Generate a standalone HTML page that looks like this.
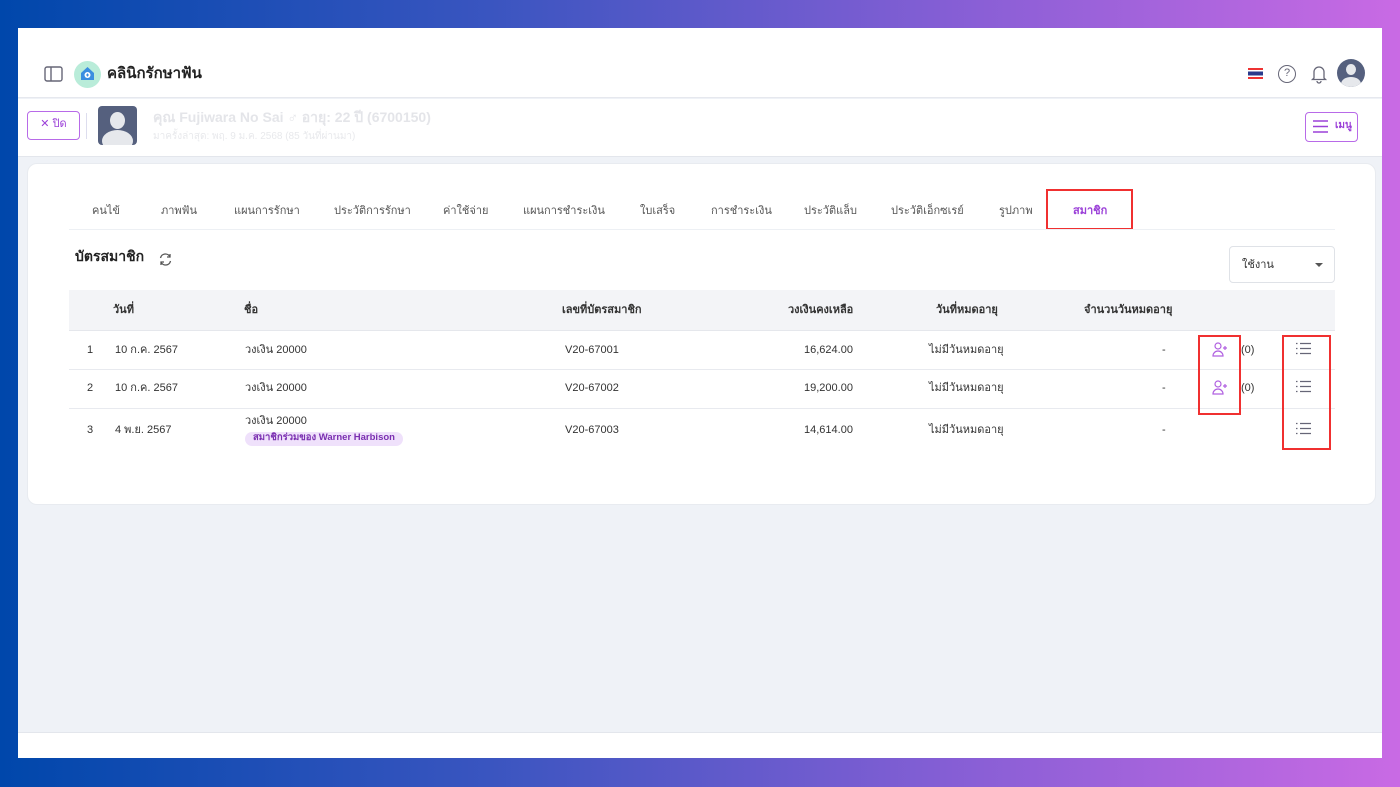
<!DOCTYPE html>
<html><head><meta charset="utf-8"><style>
*{box-sizing:border-box;margin:0;padding:0}
body{width:1400px;height:787px;overflow:hidden;background:linear-gradient(90deg,#0047ab 0%,#3a55c0 35%,#8a5fd6 70%,#c96ae4 100%);font-family:"Liberation Sans","DejaVu Sans",sans-serif;position:relative;color:#222}
.frame{position:absolute;left:18px;top:28px;width:1364px;height:730px;background:#eff2f7;overflow:hidden}
.hdr{position:absolute;left:0;top:0;width:1364px;height:70px;background:#fff;border-bottom:1px solid #e6e8ee}
.pbar{position:absolute;left:0;top:71px;width:1364px;height:58px;background:#fff;border-bottom:1px solid #e3e6ec}
.foot{position:absolute;left:0;top:704px;width:1364px;height:26px;background:#fff;border-top:1px solid #e3e6ec}
.card{position:absolute;left:9px;top:135px;width:1349px;height:342px;background:#fff;border-radius:10px;border:1px solid #e8ebf0}
.abs{position:absolute}
.tab{position:absolute;top:37px;font-size:11px;color:#555}
.th{position:absolute;font-size:11px;font-weight:bold;color:#333}
.td{position:absolute;font-size:11px;color:#333}
.t{margin-top:-4px}
.red{position:absolute;border:2px solid #f03030}
.line{position:absolute;left:41px;width:1266px;height:1px;background:#e8eaef}
</style></head><body>
<div class="frame">
 <div class="hdr">
  <svg class="abs" style="left:26px;top:38px" width="19" height="16" viewBox="0 0 19 16"><rect x="1" y="1" width="17" height="14" rx="2" fill="none" stroke="#667" stroke-width="1.4"/><line x1="7" y1="1" x2="7" y2="15" stroke="#667" stroke-width="1.4"/></svg>
  <div class="abs" style="left:56px;top:33px;width:27px;height:27px;border-radius:50%;background:#b9ecd9"></div>
  <svg class="abs" style="left:61px;top:37px" width="17" height="17" viewBox="0 0 17 17"><path d="M2 8 L8.5 2 L15 8 V15 H2Z" fill="#3a8ee0"/><circle cx="8.5" cy="10" r="3" fill="#fff"/><path d="M8.5 8.5v3M7 10h3" stroke="#3a8ee0" stroke-width="1"/></svg>
  <div class="abs" style="left:89px;top:33px;font-size:15px;font-weight:bold;color:#222">คลินิกรักษาฟัน</div>
  <div class="abs" style="left:1230px;top:40px;width:15px;height:11px;background:linear-gradient(#e33 0 18%,#fff 18% 34%,#2a3a8c 34% 66%,#fff 66% 82%,#e33 82%)"></div>
  <div class="abs" style="left:1260px;top:37px;width:18px;height:18px;border:1.5px solid #667;border-radius:50%;font-size:11px;text-align:center;line-height:15px;color:#667">?</div>
  <svg class="abs" style="left:1292px;top:36px" width="18" height="20" viewBox="0 0 18 20"><path d="M4 14 V8 a5 5 0 0 1 10 0 V14 L15.5 15.5 H2.5Z M7 17 a2 2 0 0 0 4 0" fill="none" stroke="#667" stroke-width="1.3"/></svg>
  <div class="abs" style="left:1319px;top:31px;width:28px;height:28px;border-radius:50%;background:#55607e;overflow:hidden"><div class="abs" style="left:9px;top:5px;width:10px;height:11px;border-radius:50%;background:#e6e8ec"></div><div class="abs" style="left:4px;top:18px;width:20px;height:14px;border-radius:50%;background:#e6e8ec"></div></div>
 </div>
 <div class="pbar">
  <div class="abs" style="left:9px;top:12px;width:53px;height:29px;border:1px solid #b86ae8;border-radius:4px;color:#9b40d8;font-size:11px;line-height:25px;text-align:center">✕ ปิด</div>
  <div class="abs" style="left:68px;top:14px;width:1px;height:26px;background:#dde"></div>
  <div class="abs" style="left:80px;top:7px;width:39px;height:39px;border-radius:4px;background:#55607e;overflow:hidden"><div class="abs" style="left:12px;top:6px;width:15px;height:17px;border-radius:50%;background:#e6e8ec"></div><div class="abs" style="left:4px;top:24px;width:31px;height:22px;border-radius:50%;background:#e6e8ec"></div></div>
  <div class="abs" style="left:135px;top:8px;font-size:14px;font-weight:bold;color:#e4e5e9">คุณ Fujiwara No Sai ♂ อายุ: 22 ปี (6700150)</div>
  <div class="abs" style="left:135px;top:30px;font-size:10px;color:#e8e9ec">มาครั้งล่าสุด: พฤ. 9 ม.ค. 2568 (85 วันที่ผ่านมา)</div>
  <div class="abs" style="left:1287px;top:13px;width:53px;height:30px;border:1px solid #b86ae8;border-radius:4px"></div>
  <svg class="abs" style="left:1294px;top:20px" width="17" height="15"><path d="M1 2h15M1 7.5h15M1 13h15" stroke="#9b40d8" stroke-width="1.5"/></svg>
  <div class="abs" style="left:1317px;top:19px;font-size:10px;color:#9b40d8;font-weight:bold">เมนู</div>
 </div>
 <div class="card">
  <div class="tab" style="left:64px">คนไข้</div>
  <div class="tab" style="left:133px">ภาพฟัน</div>
  <div class="tab" style="left:206px">แผนการรักษา</div>
  <div class="tab" style="left:306px">ประวัติการรักษา</div>
  <div class="tab" style="left:415px">ค่าใช้จ่าย</div>
  <div class="tab" style="left:495px">แผนการชำระเงิน</div>
  <div class="tab" style="left:612px">ใบเสร็จ</div>
  <div class="tab" style="left:683px">การชำระเงิน</div>
  <div class="tab" style="left:776px">ประวัติแล็บ</div>
  <div class="tab" style="left:863px">ประวัติเอ็กซเรย์</div>
  <div class="tab" style="left:971px">รูปภาพ</div>
  <div class="tab" style="left:1045px;color:#9b40d8;font-weight:bold">สมาชิก</div>
  <div class="red" style="left:1018px;top:25px;width:87px;height:41px"></div>
  <div class="abs" style="left:41px;top:65px;width:1266px;height:1px;background:#edf0f4"></div>
  <div class="abs" style="left:47px;top:82px;font-size:14px;font-weight:bold;color:#222">บัตรสมาชิก</div>
  <svg class="abs" style="left:130px;top:88px" width="15" height="15" viewBox="0 0 15 15"><path d="M2.5 6 A5 5 0 0 1 12 5 M12.5 9 A5 5 0 0 1 3 10" fill="none" stroke="#555" stroke-width="1.3"/><path d="M12 2v3h-3M3 13v-3h3" fill="none" stroke="#555" stroke-width="1.3"/></svg>
  <div class="abs" style="left:1201px;top:82px;width:106px;height:37px;border:1px solid #dfe2e7;border-radius:4px"></div>
  <div class="abs" style="left:1214px;top:91px;font-size:11px;color:#333">ใช้งาน</div>
  <div class="abs" style="left:1287px;top:99px;border-left:4px solid transparent;border-right:4px solid transparent;border-top:4px solid #555"></div>
  <div class="abs" style="left:41px;top:126px;width:1266px;height:41px;background:#f3f4f7;border-bottom:1px solid #e5e7ec"></div>
  <div class="th t" style="left:85px;top:140px">วันที่</div>
  <div class="th t" style="left:216px;top:140px">ชื่อ</div>
  <div class="th t" style="left:534px;top:140px">เลขที่บัตรสมาชิก</div>
  <div class="th t" style="left:760px;top:140px">วงเงินคงเหลือ</div>
  <div class="th t" style="left:908px;top:140px">วันที่หมดอายุ</div>
  <div class="th t" style="left:1056px;top:140px">จำนวนวันหมดอายุ</div>
  <div class="line" style="top:205px"></div>
  <div class="line" style="top:244px"></div>
  <div class="td" style="left:59px;top:180px">1</div><div class="td t" style="left:87px;top:180px">10 ก.ค. 2567</div><div class="td t" style="left:217px;top:180px">วงเงิน 20000</div><div class="td" style="left:537px;top:180px">V20-67001</div><div class="td" style="left:776px;top:180px">16,624.00</div><div class="td t" style="left:901px;top:180px">ไม่มีวันหมดอายุ</div><div class="td" style="left:1134px;top:180px">-</div><div class="td" style="left:1213px;top:180px">(0)</div>
  <div class="td" style="left:59px;top:218px">2</div><div class="td t" style="left:87px;top:218px">10 ก.ค. 2567</div><div class="td t" style="left:217px;top:218px">วงเงิน 20000</div><div class="td" style="left:537px;top:218px">V20-67002</div><div class="td" style="left:776px;top:218px">19,200.00</div><div class="td t" style="left:901px;top:218px">ไม่มีวันหมดอายุ</div><div class="td" style="left:1134px;top:218px">-</div><div class="td" style="left:1213px;top:218px">(0)</div>
  <div class="td" style="left:59px;top:260px">3</div><div class="td t" style="left:87px;top:260px">4 พ.ย. 2567</div><div class="td t" style="left:217px;top:251px">วงเงิน 20000</div><div class="td" style="left:537px;top:260px">V20-67003</div><div class="td" style="left:776px;top:260px">14,614.00</div><div class="td t" style="left:901px;top:260px">ไม่มีวันหมดอายุ</div><div class="td" style="left:1134px;top:260px">-</div>
  <div class="abs" style="left:217px;top:268px;height:14px;padding:0 8px;border-radius:7px;background:#efe1fb;color:#7a2fb0;font-size:9.5px;line-height:12px;font-weight:bold">สมาชิกร่วมของ Warner Harbison</div>
  <svg class="abs" style="left:1184px;top:178px" width="16" height="15" viewBox="0 0 16 15"><circle cx="6" cy="4" r="3" fill="none" stroke="#b060e0" stroke-width="1.2"/><path d="M1 14 a5 5 0 0 1 10 0Z" fill="none" stroke="#b060e0" stroke-width="1.2"/><path d="M13 4v4M11 6h4" stroke="#b060e0" stroke-width="1.2"/></svg>
  <svg class="abs" style="left:1184px;top:216px" width="16" height="15" viewBox="0 0 16 15"><circle cx="6" cy="4" r="3" fill="none" stroke="#b060e0" stroke-width="1.2"/><path d="M1 14 a5 5 0 0 1 10 0Z" fill="none" stroke="#b060e0" stroke-width="1.2"/><path d="M13 4v4M11 6h4" stroke="#b060e0" stroke-width="1.2"/></svg>
  <svg class="abs" style="left:1268px;top:178px" width="15" height="13"><path d="M0 1.5h1.5M0 6.5h1.5M0 11.5h1.5M4 1.5h11M4 6.5h11M4 11.5h11" stroke="#667" stroke-width="1.3"/></svg>
  <svg class="abs" style="left:1268px;top:216px" width="15" height="13"><path d="M0 1.5h1.5M0 6.5h1.5M0 11.5h1.5M4 1.5h11M4 6.5h11M4 11.5h11" stroke="#667" stroke-width="1.3"/></svg>
  <svg class="abs" style="left:1268px;top:258px" width="15" height="13"><path d="M0 1.5h1.5M0 6.5h1.5M0 11.5h1.5M4 1.5h11M4 6.5h11M4 11.5h11" stroke="#667" stroke-width="1.3"/></svg>
  <div class="red" style="left:1170px;top:171px;width:43px;height:80px"></div>
  <div class="red" style="left:1254px;top:171px;width:49px;height:115px"></div>
 </div>
 <div class="foot"></div>
</div>
</body></html>
